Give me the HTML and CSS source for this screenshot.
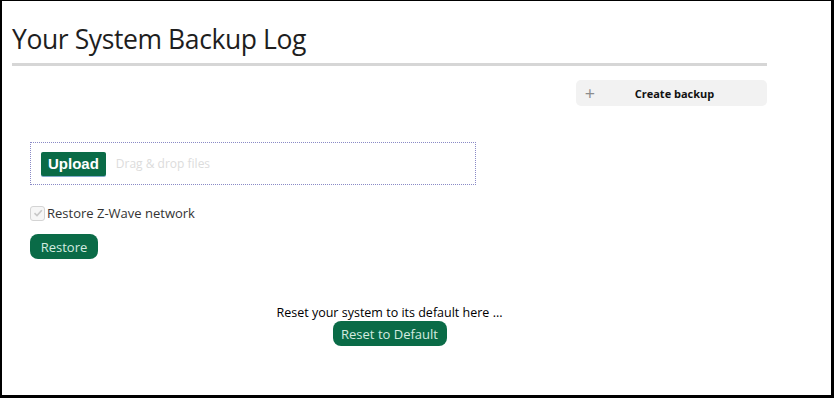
FILE: index.html
```html
<!DOCTYPE html>
<html lang="en">
<head>
    <meta charset="UTF-8">
    <title>Your System Backup Log</title>
    <link rel="stylesheet" href="styles.css">
</head>
<body>
    <div class="frame">
        <div class="page">
            <h1 class="title">Your System Backup Log</h1>
            <div class="actions">
                <button class="create-btn"><span class="plus">+</span><span class="create-label">Create backup</span></button>
            </div>
            <div class="restore-area">
                <div class="dropzone">
                    <button class="upload-btn">Upload</button>
                    <span class="drop-hint">Drag &amp; drop files</span>
                </div>
                <label class="check-row">
                    <span class="check-box">
                        <svg width="12" height="12" viewBox="0 0 12 12"><path d="M2.5 6.2 L5 8.6 L9.8 3.2" fill="none" stroke="#c8c8c8" stroke-width="1.6"/></svg>
                    </span>
                    Restore Z-Wave network
                </label>
                <button class="green-btn restore-btn">Restore</button>
            </div>
            <div class="reset">
                <div class="reset-text">Reset your system to its default here ...</div>
                <button class="green-btn">Reset to Default</button>
            </div>
        </div>
    </div>
</body>
</html>
```

FILE: styles.css
```css
:root {
    --green: #0a6b47;
    --green-text: #d4ebe0;
    --text: #222;
}
html, body {
    margin: 0;
    padding: 0;
    background: #fff;
    font-family: 'Open Sans', Arial, sans-serif;
    color: var(--text);
}
.frame {
    box-sizing: border-box;
    width: 834px;
    height: 398px;
    border-top: 1px solid #000;
    border-left: 2px solid #000;
    border-right: 3px solid #000;
    border-bottom: 3px solid #000;
    overflow: hidden;
}
.page {
    width: 755px;
    margin-left: 10px;
    display: flex;
    flex-direction: column;
}
.title {
    margin: 19px 0 0 0;
    font-size: 26.5px;
    font-weight: 400;
    line-height: 38px;
    color: #1e1e1e;
    padding-bottom: 5px;
    border-bottom: 3px solid #d6d6d6;
    letter-spacing: -0.4px;
}
.actions {
    display: flex;
    justify-content: flex-end;
    margin-top: 14px;
}
.create-btn {
    width: 191px;
    height: 26px;
    border: none;
    border-radius: 5px;
    background: #f2f2f2;
    display: flex;
    align-items: center;
    padding: 0 0 0 8px;
    font-family: 'Open Sans', Arial, sans-serif;
    cursor: pointer;
}
.plus {
    color: #8c8c8c;
    font-size: 18px;
    font-weight: 400;
    width: 12px;
    line-height: 1;
}
.create-label {
    flex: 1;
    text-align: center;
    font-size: 11px;
    font-weight: 700;
    color: #111;
    padding-right: 14px;
}
.restore-area {
    margin-left: 18px;
    margin-top: 36px;
    display: flex;
    flex-direction: column;
    align-items: flex-start;
}
.dropzone {
    box-sizing: border-box;
    width: 446px;
    height: 43px;
    border: 1px dotted #8a8ac6;
    display: flex;
    align-items: center;
    gap: 10px;
    padding-left: 10px;
}
.upload-btn {
    height: 24px;
    padding: 0 7px;
    border: none;
    border-radius: 2px;
    background: var(--green);
    color: #fff;
    font-family: 'Liberation Sans', Arial, sans-serif;
    font-weight: 700;
    font-size: 15px;
    box-shadow: 0 1px 0 #7fa9c9;
}
.drop-hint {
    color: #dcdcdc;
    font-size: 12px;
}
.check-row {
    display: flex;
    align-items: center;
    margin-top: 19px;
    font-size: 13px;
    color: #333;
}
.check-box {
    box-sizing: border-box;
    width: 15px;
    height: 15px;
    border: 1px solid #d4d4d4;
    border-radius: 3px;
    background: #f6f6f6;
    display: flex;
    align-items: center;
    justify-content: center;
    margin-right: 2px;
}
.green-btn {
    height: 25px;
    padding: 0 12px;
    border: none;
    border-radius: 8px;
    background: var(--green);
    color: var(--green-text);
    font-family: 'Open Sans', Arial, sans-serif;
    font-size: 13px;
    cursor: pointer;
}
.restore-btn {
    margin-top: 12px;
    width: 68px;
    padding: 0;
}
.reset {
    display: flex;
    flex-direction: column;
    align-items: center;
    margin-top: 45px;
}
.reset-text {
    font-size: 12.5px;
    color: #000;
    line-height: 18px;
}
.reset .green-btn {
    width: 114px;
    padding: 0;
    margin-top: -1px;
}
```
